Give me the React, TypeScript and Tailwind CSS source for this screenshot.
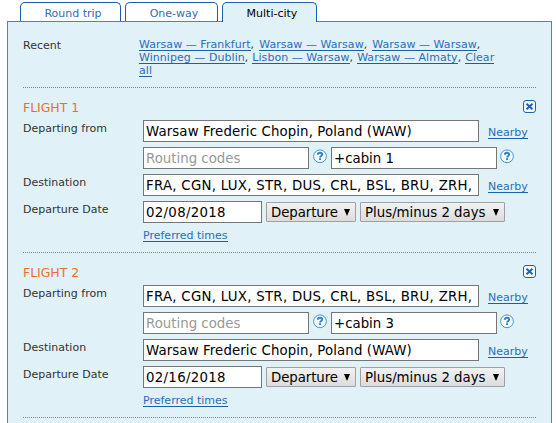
import { useState } from 'react'

interface Flight {
  id: number
  from: string
  cabin: string
  to: string
  date: string
}

const TABS = [
  { name: 'Round trip', width: 'w-[101px]' },
  { name: 'One-way', width: 'w-[93px]' },
  { name: 'Multi-city', width: 'w-[95px]' },
]

const RECENT = [
  { gap: 'mr-[5px]', routes: ['Warsaw — Frankfurt', 'Warsaw — Warsaw', 'Warsaw — Warsaw'] },
  { gap: 'mr-1', routes: ['Winnipeg — Dublin', 'Lisbon — Warsaw', 'Warsaw — Almaty'] },
]

const FLIGHTS: Flight[] = [
  {
    id: 1,
    from: 'Warsaw Frederic Chopin, Poland (WAW)',
    cabin: '+cabin 1',
    to: 'FRA, CGN, LUX, STR, DUS, CRL, BSL, BRU, ZRH,',
    date: '02/08/2018',
  },
  {
    id: 2,
    from: 'FRA, CGN, LUX, STR, DUS, CRL, BSL, BRU, ZRH,',
    cabin: '+cabin 3',
    to: 'Warsaw Frederic Chopin, Poland (WAW)',
    date: '02/16/2018',
  },
]

const linkClass = 'text-[#2a6ebb] border-b border-[#1a5fa8] leading-[11px] whitespace-nowrap'

// lists of airport codes are set a little wider than place names
const airportTracking = (value: string) => (value.includes('(') ? 'tracking-[0.11px]' : 'tracking-[0.27px]')

function HelpIcon() {
  return (
    <svg className="mt-[2px] h-[15px] w-[15px] shrink-0" viewBox="0 0 15 15" fill="none">
      <circle cx="7" cy="7.3" r="6.4" fill="#f4fafe" stroke="#4795d6" />
      <path d="M4.9 5.7c0-1.3.9-1.9 2.1-1.9s2.2.6 2.2 1.8c0 1.3-2.1 1.4-2.1 2.9" stroke="#2e80cb" strokeWidth="1.9" />
      <path d="M6.1 9.3h1.9v1.8H6.1z" fill="#2e80cb" />
    </svg>
  )
}

function CloseIcon() {
  return (
    <svg className="h-[13px] w-[13px]" viewBox="0 0 13 13" fill="none">
      <rect x=".5" y=".5" width="12" height="12" rx="2.5" fill="#f1f8fc" stroke="#1f62a8" />
      <path d="M3.5 3.7l6 5.6M9.5 3.7l-6 5.6" stroke="#1f62a8" strokeWidth="1.9" />
    </svg>
  )
}

function Field({ value, className, placeholder }: { value: string; className: string; placeholder?: string }) {
  const [text, setText] = useState(value)
  return (
    <input
      className={`h-[22px] shrink-0 border border-[#767676] bg-white px-[2px] text-[13.33px] text-black outline-none placeholder:text-[#999] placeholder:opacity-100 ${className}`}
      value={text}
      placeholder={placeholder}
      onChange={(e) => setText(e.target.value)}
    />
  )
}

function Dropdown({ label, className }: { label: string; className: string }) {
  return (
    <button
      className={`mt-px flex h-5 shrink-0 items-center justify-between rounded-[1px] border border-[#a0a0a0] bg-linear-to-b from-[#f2f2f2] to-[#dcdcdc] pr-[5px] pl-1 text-[13.33px] leading-[18px] whitespace-nowrap text-black ${className}`}
    >
      <span className="pt-px">{label}</span>
      <svg className="h-[7px] w-[6px]" viewBox="0 0 6 7">
        <path d="M0 0h6L3 7z" fill="#000" />
      </svg>
    </button>
  )
}

function FlightSection({ flight }: { flight: Flight }) {
  return (
    <section className="h-[165px] border-t border-dotted border-[#7d8286]">
      <div className="flex h-8 items-start justify-between pt-3">
        <h2 className="text-[12.5px] leading-4 tracking-[-0.05px] text-[#e8702f]">FLIGHT {flight.id}</h2>
        <button className="h-[13px]" title="Remove flight">
          <CloseIcon />
        </button>
      </div>
      <div className="grid grid-cols-[120px_1fr] auto-rows-[27px]">
        <span className="pt-[2px] leading-[14px]">Departing from</span>
        <div className="flex items-start">
          <Field value={flight.from} className={`w-[336px] ${airportTracking(flight.from)}`} />
          <a href="#" className={`mt-[7px] ml-[9px] ${linkClass}`}>Nearby</a>
        </div>
        <span />
        <div className="flex items-start">
          <Field value="" placeholder="Routing codes" className="mr-1 w-[166px]" />
          <HelpIcon />
          <Field value={flight.cabin} className="mx-[3px] w-[166px]" />
          <HelpIcon />
        </div>
        <span className="pt-[2px] leading-[14px]">Destination</span>
        <div className="flex items-start">
          <Field value={flight.to} className={`w-[336px] ${airportTracking(flight.to)}`} />
          <a href="#" className={`mt-[7px] ml-[9px] ${linkClass}`}>Nearby</a>
        </div>
        <span className="pt-[2px] leading-[14px]">Departure Date</span>
        <div className="flex items-start gap-1">
          <Field value={flight.date} className="w-[119px] tracking-[0.3px]" />
          <Dropdown label="Departure" className="w-[90px] tracking-[-0.08px]" />
          <Dropdown label="Plus/minus 2 days" className="w-[145px]" />
        </div>
        <span />
        <div className="flex items-start">
          <a href="#" className={`mt-[2px] ${linkClass}`}>Preferred times</a>
        </div>
      </div>
    </section>
  )
}

export default function App() {
  const [active, setActive] = useState('Multi-city')

  return (
    <div className="h-[423px] w-[556px] overflow-hidden bg-white pt-[2px] pl-[7px] font-['DejaVu_Sans',sans-serif] text-[11px] text-[#333]">
      <div className="relative z-10 flex gap-1 pl-[13px]">
        {TABS.map((tab) => (
          <button
            key={tab.name}
            className={`h-5 rounded-t-[5px] border border-b-0 border-[#1a5fa8] pt-[2px] pl-[5px] leading-[18px] ${tab.width} ${active === tab.name ? 'bg-[#e1f1f8] text-black' : 'mb-px h-[19px] bg-white text-[#2a6ebb]'}`}
            onClick={() => setActive(tab.name)}
          >
            {tab.name}
          </button>
        ))}
      </div>
      <div className="-mt-px h-[430px] w-[545px] border border-[#4a86bd] bg-[#e1f1f8] px-[15px]">
        <div className="grid h-[65px] grid-cols-[116px_1fr] pt-4">
          <span className="pt-px leading-[14px]">Recent</span>
          <div className="pt-px tracking-[0.05px]">
            {RECENT.map((row, i) => (
              <div key={i} className="flex h-[13px] items-start">
                {row.routes.map((route, j) => (
                  <span key={j} className={`flex ${row.gap}`}>
                    <a href="#" className={linkClass}>{route}</a>
                    <span className="leading-[11px]">,</span>
                  </span>
                ))}
                {i === RECENT.length - 1 && <a href="#" className={linkClass}>Clear</a>}
              </div>
            ))}
            <div className="flex h-[13px] items-start">
              <a href="#" className={linkClass}>all</a>
            </div>
          </div>
        </div>
        {FLIGHTS.map((flight) => (
          <FlightSection key={flight.id} flight={flight} />
        ))}
        <div className="border-t border-dotted border-[#7d8286]" />
      </div>
    </div>
  )
}
